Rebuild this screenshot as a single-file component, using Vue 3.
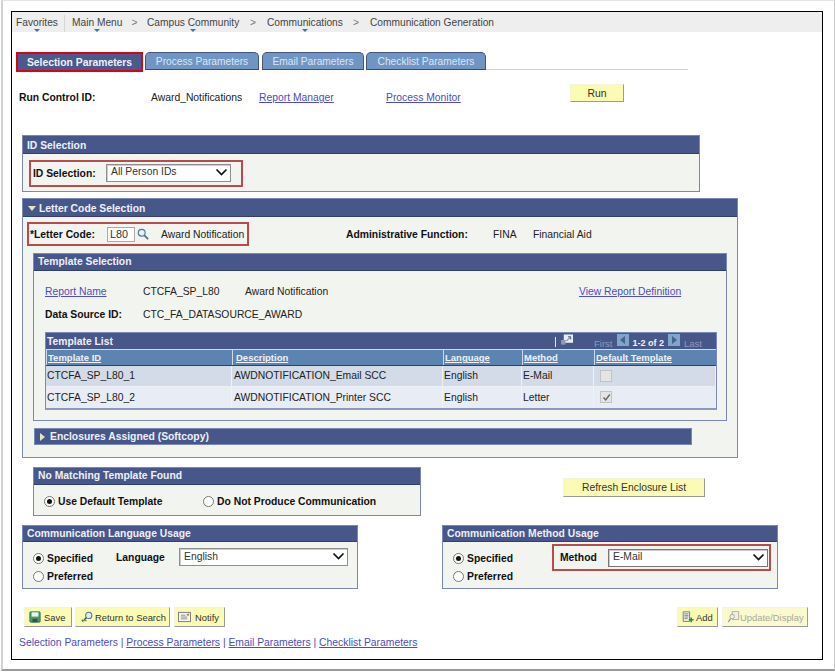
<script setup>
const tabs = ['Process Parameters', 'Email Parameters', 'Checklist Parameters']
const columns = ['Template ID', 'Description', 'Language', 'Method', 'Default Template']
const rows = [
  { id: 'CTCFA_SP_L80_1', desc: 'AWDNOTIFICATION_Email SCC', lang: 'English', method: 'E-Mail', checked: false },
  { id: 'CTCFA_SP_L80_2', desc: 'AWDNOTIFICATION_Printer SCC', lang: 'English', method: 'Letter', checked: true }
]
</script>

<template>
  <div class="shell">
    <div class="frame">
      <nav class="nav">
        <span class="nav-item fav">Favorites</span>
        <span class="nav-sep"></span>
        <span class="nav-item main">Main Menu</span><span class="gt g1">&gt;</span>
        <span class="nav-item cc">Campus Community</span><span class="gt g2">&gt;</span>
        <span class="nav-item comm">Communications</span><span class="gt g3">&gt;</span>
        <span class="nav-last">Communication Generation</span>
      </nav>

      <div class="tabs">
        <div class="tab-active"><span>Selection Parameters</span></div>
        <div v-for="t in tabs" :key="t" class="tab" :class="'t-' + t.charAt(0)">{{ t }}</div>
        <div class="tab-line"></div>
      </div>

      <div class="run-row">
        <b>Run Control ID:</b>
        <span>Award_Notifications</span>
        <a>Report Manager</a>
        <a>Process Monitor</a>
        <div class="btn run">Run</div>
      </div>

      <section class="panel id-panel">
        <header class="head">ID Selection</header>
        <div class="id-body">
          <div class="red id-red">
            <b>ID Selection:</b>
            <div class="select id-select"><span>All Person IDs</span>
              <svg width="13" height="8" viewBox="0 0 13 8"><path d="M1.5 1.5 6.5 6.5 11.5 1.5" fill="none" stroke="#111" stroke-width="1.7"/></svg>
            </div>
          </div>
        </div>
      </section>

      <section class="panel letter-panel">
        <header class="head letter-head">
          <svg width="8" height="5" viewBox="0 0 8 5"><path d="M0 0H8L4 5Z" fill="#e6e2c8"/></svg>
          <span>Letter Code Selection</span>
        </header>
        <div class="letter-top">
          <div class="red letter-red">
            <b>*Letter Code:</b>
            <div class="code">L80</div>
            <svg class="lens" width="12" height="12" viewBox="0 0 14 14"><circle cx="5.5" cy="5.5" r="4" fill="#e8f2f8" stroke="#4f7f96" stroke-width="1.4"/><path d="M8.6 8.6 13 13" stroke="#5d6f78" stroke-width="2"/></svg>
            <span>Award Notification</span>
          </div>
          <b class="admin">Administrative Function:</b>
          <span class="fina">FINA</span>
          <span class="aid">Financial Aid</span>
        </div>

        <section class="panel template-panel">
          <header class="head template-head">Template Selection</header>
          <div class="report-row">
            <a>Report Name</a>
            <span class="v1">CTCFA_SP_L80</span>
            <span class="v2">Award Notification</span>
            <a class="view">View Report Definition</a>
          </div>
          <div class="source-row">
            <b>Data Source ID:</b>
            <span>CTC_FA_DATASOURCE_AWARD</span>
          </div>

          <div class="grid-box">
            <div class="grid-title">
              <b>Template List</b>
              <div class="pager">
                <span class="bar"></span>
                <svg class="popout" width="12" height="12" viewBox="0 0 13 12"><rect x="3" y="0" width="10" height="9" fill="#e9edf4"/><path d="M6 7 10 3M7.5 2.5H10.5V5.5" stroke="#3d4d7e" fill="none"/><rect x="0" y="6" width="5" height="5" fill="#8d99b8"/></svg>
                <span class="dim first">First</span>
                <span class="arrow"><svg width="6" height="8" viewBox="0 0 6 8"><path d="M5 0V8L0 4Z" fill="#4a5f92"/></svg></span>
                <b class="count">1-2 of 2</b>
                <span class="arrow"><svg width="6" height="8" viewBox="0 0 6 8"><path d="M1 0V8L6 4Z" fill="#4a5f92"/></svg></span>
                <span class="dim last">Last</span>
              </div>
            </div>
            <div class="tr th">
              <div v-for="c in columns" :key="c"><a>{{ c }}</a></div>
            </div>
            <div v-for="(r, i) in rows" :key="r.id" class="tr td" :class="i ? 'even' : 'odd'">
              <div>{{ r.id }}</div>
              <div>{{ r.desc }}</div>
              <div>{{ r.lang }}</div>
              <div>{{ r.method }}</div>
              <div><span class="check">
                <svg v-if="r.checked" width="9" height="9" viewBox="0 0 9 9"><path d="M1.5 4.5 3.7 7 7.8 1.5" fill="none" stroke="#666" stroke-width="1.4"/></svg>
              </span></div>
            </div>
          </div>
        </section>

        <div class="enclosures">
          <svg width="5" height="8" viewBox="0 0 5 8"><path d="M0 0 5 4 0 8Z" fill="#e6e2c8"/></svg>
          <span>Enclosures Assigned (Softcopy)</span>
        </div>
      </section>

      <div class="match-row">
        <section class="panel match-panel">
          <header class="head">No Matching Template Found</header>
          <div class="match-body">
            <label class="opt first-opt"><i class="radio on"></i><b>Use Default Template</b></label>
            <label class="opt"><i class="radio"></i><b>Do Not Produce Communication</b></label>
          </div>
        </section>
        <div class="btn refresh">Refresh Enclosure List</div>
      </div>

      <div class="usage-row">
        <section class="panel usage">
          <header class="head">Communication Language Usage</header>
          <div class="usage-body">
            <div class="radios">
              <label class="opt"><i class="radio on"></i><b>Specified</b></label>
              <label class="opt"><i class="radio"></i><b>Preferred</b></label>
            </div>
            <div class="lang-wrap">
              <b>Language</b>
              <div class="select usage-select"><span>English</span>
                <svg width="13" height="8" viewBox="0 0 13 8"><path d="M1.5 1.5 6.5 6.5 11.5 1.5" fill="none" stroke="#111" stroke-width="1.7"/></svg>
              </div>
            </div>
          </div>
        </section>
        <section class="panel usage">
          <header class="head">Communication Method Usage</header>
          <div class="usage-body">
            <div class="radios">
              <label class="opt"><i class="radio on"></i><b>Specified</b></label>
              <label class="opt"><i class="radio"></i><b>Preferred</b></label>
            </div>
            <div class="red method-red">
              <b>Method</b>
              <div class="select method-select"><span>E-Mail</span>
                <svg width="13" height="8" viewBox="0 0 13 8"><path d="M1.5 1.5 6.5 6.5 11.5 1.5" fill="none" stroke="#111" stroke-width="1.7"/></svg>
              </div>
            </div>
          </div>
        </section>
      </div>

      <div class="toolbar">
        <div class="btn tool save">
          <svg width="12" height="12" viewBox="0 0 14 14"><rect x="1" y="1" width="12" height="12" rx="1" fill="#4d9a6a" stroke="#2f6d5d"/><rect x="3" y="1.5" width="8" height="5" fill="#e8f2ea"/><rect x="4" y="9" width="6" height="4" fill="#1f5c49"/></svg>
          <span>Save</span>
        </div>
        <div class="btn tool ret">
          <svg width="13" height="12" viewBox="0 0 16 14"><circle cx="9.5" cy="5" r="3.8" fill="#dfeaf5" stroke="#5a6f95" stroke-width="1.3"/><path d="M6.8 7.8 4 10.5" stroke="#44506a" stroke-width="1.8"/><path d="M1 11.5H7M1 11.5 3 9.8M1 11.5 3 13.2" stroke="#2d6a45" fill="none"/></svg>
          <span>Return to Search</span>
        </div>
        <div class="btn tool notify">
          <svg width="13" height="12" viewBox="0 0 14 13"><rect x=".5" y="1.5" width="13" height="10" fill="#f6f6ee" stroke="#77777a"/><path d="M3 4.5H8M3 6.5H10M3 8.5H10" stroke="#8a8a90"/><rect x="9.5" y="3" width="2.5" height="2" fill="#c96a5a"/></svg>
          <span>Notify</span>
        </div>
        <div class="btn tool add">
          <svg width="12" height="12" viewBox="0 0 15 14"><path d="M1.5.5H9.5V12.5H1.5Z" fill="#f3f3ea" stroke="#5e6470"/><path d="M3 3H8M3 5H8M3 7H8M3 9H7" stroke="#6a7080"/><path d="M11.5 7.5V13.5M8.5 10.5H14.5" stroke="#159a3a" stroke-width="2"/></svg>
          <span>Add</span>
        </div>
        <div class="btn tool update">
          <svg width="13" height="12" viewBox="0 0 14 14"><path d="M5.5.5H13V10H5.5Z" fill="#f1f1d8" stroke="#a8a8a0"/><circle cx="5.5" cy="6.5" r="2.6" fill="#eee" stroke="#a0a09c"/><path d="M3.5 8.8 .8 13" stroke="#a0a09c" stroke-width="1.6"/></svg>
          <span>Update/Display</span>
        </div>
      </div>

      <footer class="foot">
        <a class="plain">Selection Parameters</a> | <a>Process Parameters</a> | <a>Email Parameters</a> | <a>Checklist Parameters</a>
      </footer>
    </div>
  </div>
</template>

<style>
html, body { margin: 0; background: #fff; }
</style>

<style scoped>
* { box-sizing: border-box; }
.shell {
  width: 834px; height: 671px; margin-left: 1px; padding: 10px 0 0 8px; overflow: hidden;
  border-left: 2px solid #d2d2d2; border-top: 1px solid #e4e4e4; border-right: 1px solid #c8c8c8; border-bottom: 2px solid #9a9a9a;
  font: 10.35px/13px "Liberation Sans", Arial, sans-serif; color: #222;
}
.frame { width: 812px; height: 649px; border: 1px solid #000; background: #fff; }
b { font-weight: 700; color: #111; }
a { color: #4c4cc4; text-decoration: underline; }

.nav { height: 20px; background: #eeeeee; display: flex; align-items: center; padding-left: 4px; color: #444; font-size: 10.2px; }
.nav-item { position: relative; white-space: nowrap; }
.nav-item::after { content: ""; position: absolute; left: 50%; margin-left: -3px; top: 13px; border: 3px solid transparent; border-top: 3px solid #3f73a8; border-bottom: 0; }
.nav-sep { width: 1px; height: 17px; margin: 3px 7px 0; background: #d6d6d6; }
.fav { width: 41px; }
.main { width: 50px; }
.gt { color: #777; width: 25px; text-align: center; }
.cc { width: 92px; }
.g2 { width: 28px; }
.comm { width: 75px; }
.g3 { width: 28px; }
.nav-last { white-space: nowrap; }

.tabs { display: flex; align-items: flex-start; margin: 20px 0 0 4px; height: 20px; }
.tab-active { width: 127px; height: 20px; border: 2px solid #e2000f; background: #4a5a8c; color: #eef1f7; font-weight: 700; text-align: center; line-height: 17px; margin-right: 2px; }
.tab { height: 18px; border: 1px solid #45557f; border-bottom: 1px solid #3b4a74; border-radius: 5px 5px 0 0; background: #7095c5; color: #dde5f0; text-align: center; line-height: 18px; font-size: 10.2px; }
.t-P { width: 114px; margin-right: 3px; }
.t-E { width: 102px; margin-right: 2px; }
.t-C { width: 120px; }
.tab-line { width: 202px; height: 18px; border-bottom: 1px solid #c5d4e8; }

.run-row { display: grid; grid-template-columns: 132px 108px 127px 184px 54px; margin: 12px 0 0 7px; align-items: end; height: 19px; }
.run-row > * { position: relative; top: 1px; }
.run-row .btn { top: 0; height: 18px; align-self: start; }
.btn { background: #fbfbb4; border: 1px solid; border-color: #f4f4d8 #9a9a9a #9a9a9a #f4f4d8; color: #333; display: flex; align-items: center; justify-content: center; white-space: nowrap; }
.run { width: 54px; }

.panel { border: 1px solid #7b88b4; background: #f2f4ef; }
.head { height: 18px; background: #47578a; color: #eef0f6; font-weight: 700; line-height: 19px; padding-left: 4px; border-bottom: 1px solid #2f3f73; }
.id-panel { margin: 32px 0 0 10px; width: 678px; height: 57px; }
.id-body { height: 38px; padding: 6px 0 0 6px; }
.red { border: 2px solid #bb4a4a; display: flex; align-items: center; }
.id-red { width: 214px; height: 27px; padding-left: 2px; }
.id-red b { width: 73px; }
.select { background: #fff; border: 1px solid #8f8f8f; box-shadow: inset 1px 1px 0 #ccc; display: flex; align-items: center; justify-content: space-between; padding: 0 2px 2px 4px; height: 18px; color: #333; }
.id-select { width: 125px; margin-top: -2px; }

.letter-panel { margin: 6px 0 0 10px; width: 716px; height: 260px; }
.letter-head { display: flex; align-items: center; gap: 3px; padding: 1px 0 0 5px; }
.letter-top { display: flex; align-items: center; height: 24px; margin: 5px 0 0 4px; }
.letter-red { width: 222px; height: 24px; padding-left: 1px; }
.letter-red b { width: 77px; }
.code { width: 28px; height: 15px; border: 1px solid #aaa; background: #fff; padding-left: 2px; line-height: 12px; font-size: 10.8px; color: #333; margin-right: 2px; }
.lens { margin-right: 12px; flex: none; }
.letter-red span { white-space: nowrap; }
.admin { margin-left: 97px; width: 147px; white-space: nowrap; }
.fina { width: 40px; }
.template-panel { margin: 7px 0 0 10px; width: 694px; height: 168px; }
.template-head { height: 17px; line-height: 16px; }
.report-row { display: flex; height: 13px; margin: 14px 0 0 11px; }
.report-row a { white-space: nowrap; }
.report-row a:first-child { width: 98px; }
.v1 { width: 102px; }
.v2 { width: 334px; }
.source-row { display: flex; margin: 10px 0 0 11px; }
.source-row b { width: 98px; }
.grid-box { width: 672px; height: 78px; margin: 11px 0 0 11px; background: #47578a; border: 1px solid #7b88b4; border-bottom: 2px solid #8d98bd; }
.grid-title { height: 16px; display: flex; justify-content: space-between; align-items: center; padding: 1px 14px 0 1px; }
.grid-title b { color: #eef0f6; }
.pager { display: flex; align-items: center; color: #fff; font-size: 9.5px; padding-top: 4px; }
.pager .bar { width: 1px; height: 10px; background: #dfe4ee; margin-right: 5px; margin-top: -4px; }
.popout { margin: -7px 21px 0 0; }
.dim { color: #8e99bd; }
.first { margin-right: 4px; }
.last { margin-left: 4px; }
.arrow { width: 12px; height: 12px; background: #7fa5c8; display: flex; align-items: center; justify-content: center; margin-top: -7px; }
.count { color: #fff; font-size: 9px; margin: 0 4px; white-space: nowrap; }
.tr { display: grid; grid-template-columns: 186px 211px 79px 72px 1fr; }
.tr > div { padding-left: 2px; display: flex; align-items: center; }
.th { height: 17px; background: #5b84b1; border-top: 1px solid #cfd8e8; border-bottom: 1px solid #2e4070; font-size: 9.5px; }
.th > div { border-left: 1px solid #cfd8e8; padding-left: 2px; }
.th > div:first-child { padding-left: 1px; }
.th > div:nth-child(2) { padding-left: 3px; }
.th > div:nth-child(3), .th > div:nth-child(4), .th > div:nth-child(5) { padding-left: 1px; }
.th a { color: #eef2f8; font-weight: 700; white-space: nowrap; }
.td { height: 21px; }
.td > div { border-right: 1px solid #f0f2f7; padding-bottom: 1px; }
.td > div:first-child { padding-left: 1px; }
.td > div:nth-child(3), .td > div:nth-child(4) { padding-left: 1px; }
.odd { background: #d3dbe8; border-bottom: 1px solid #eef0f6; }
.even { background: #e8ecf5; }
.check { width: 12px; height: 12px; margin-left: 4px; border: 1px solid #c2c2c2; background: #e4e4e4; display: flex; align-items: center; justify-content: center; }

.enclosures { width: 658px; height: 17px; margin: 7px 0 0 11px; background: #47578a; border: 1px solid #7b88b4; color: #eef0f6; font-weight: 700; display: flex; align-items: center; gap: 5px; padding-left: 5px; }

.match-row { display: flex; margin: 9px 0 0 21px; }
.match-panel { width: 388px; height: 49px; }
.match-panel .head { height: 17px; line-height: 15px; }
.match-body { display: flex; padding: 10px 0 0 10px; }
.opt { display: flex; align-items: center; gap: 3px; white-space: nowrap; }
.first-opt { width: 159px; }
.radio { width: 11px; height: 11px; border: 1px solid #777; border-radius: 50%; background: #fff; display: block; flex: none; position: relative; }
.radio.on::after { content: ""; position: absolute; inset: 2px; border-radius: 50%; background: #111; }
.refresh { width: 142px; height: 19px; margin: 11px 0 0 142px; }

.usage-row { display: flex; margin: 9px 0 0 10px; gap: 84px; }
.usage { width: 336px; height: 64px; }
.usage .head { height: 16px; line-height: 16px; }
.usage-body { display: flex; padding: 6px 0 0 10px; }
.radios { width: 83px; display: flex; flex-direction: column; gap: 5px; padding-top: 4px; }
.lang-wrap { display: flex; align-items: center; height: 18px; }
.lang-wrap b { width: 63px; }
.usage-select { width: 169px; }
.method-red { margin: -4px 0 0 16px; width: 219px; height: 27px; padding-left: 6px; }
.method-red b { width: 48px; }
.method-select { width: 160px; border-color: #777; }

.toolbar { display: flex; height: 20px; margin: 18px 0 0 12px; }
.tool { height: 20px; color: #333; justify-content: flex-start; padding-left: 4px; font-size: 9.4px; }
.save { width: 48px; margin-right: 3px; gap: 3px; }
.ret { width: 95px; margin-right: 4px; gap: 1px; padding-left: 5px; }
.notify { width: 51px; margin-right: 452px; gap: 4px; padding-left: 3px; }
.add { width: 41px; margin-right: 4px; gap: 2px; }
.update { width: 86px; color: #a8a8a0; background: #fafacc; }

.foot { margin: 9px 0 0 7px; color: #4c4cc4; }
.foot .plain { text-decoration: none; }
</style>
